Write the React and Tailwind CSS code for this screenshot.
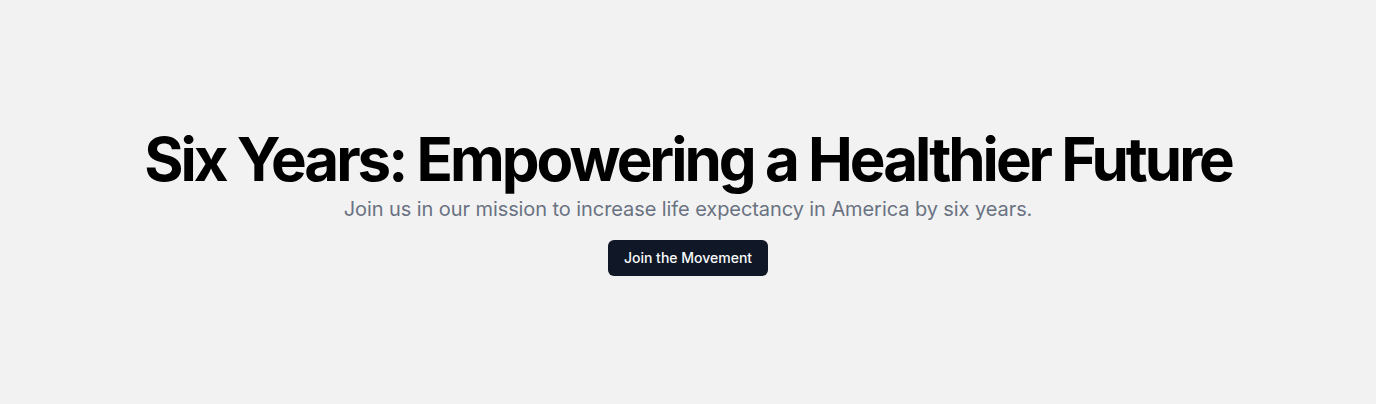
export default function App() {
  return (
    <main className="flex min-h-screen w-full items-center justify-center bg-[#f2f2f2] font-['Inter',sans-serif]">
      <section className="flex flex-col items-center px-4 text-center">
        <h1 className="text-6xl font-bold leading-none tracking-tighter text-black">
          Six Years: Empowering a Healthier Future
        </h1>
        <p className="mt-1.5 text-xl tracking-[-0.08px] text-gray-500">
          Join us in our mission to increase life expectancy in America by six years.
        </p>
        <button className="mt-[17px] h-9 rounded-md bg-gray-900 px-4 text-sm font-medium text-gray-50" type="button">
          Join the Movement
        </button>
      </section>
    </main>
  );
}
